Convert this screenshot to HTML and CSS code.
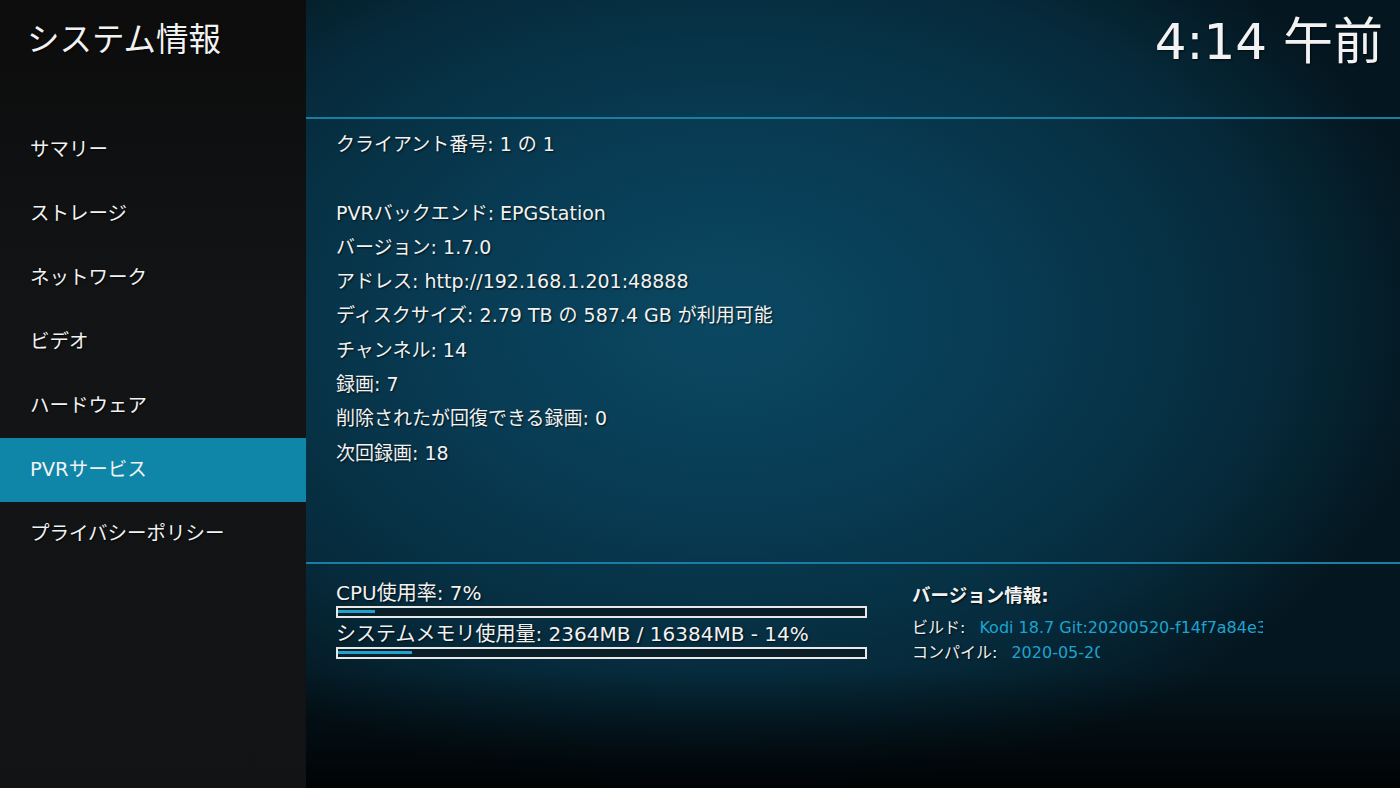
FILE: index.html
```html
<!DOCTYPE html>
<html lang="ja">
<head>
    <meta charset="UTF-8">
    <title>システム情報</title>
    <link rel="stylesheet" href="styles.css">
</head>
<body>
    <aside class="sidebar">
        <h1 class="title">システム情報</h1>
        <ul class="menu">
            <li>サマリー</li>
            <li>ストレージ</li>
            <li>ネットワーク</li>
            <li>ビデオ</li>
            <li>ハードウェア</li>
            <li class="active">PVRサービス</li>
            <li>プライバシーポリシー</li>
        </ul>
    </aside>

    <main class="panel">
        <header class="topbar">
            <div class="clock">4:14 午前</div>
        </header>

        <section class="info">
            <p>クライアント番号: 1 の 1</p>
            <p>&nbsp;</p>
            <p>PVRバックエンド: EPGStation</p>
            <p>バージョン: 1.7.0</p>
            <p>アドレス: http://192.168.1.201:48888</p>
            <p>ディスクサイズ: 2.79 TB の 587.4 GB が利用可能</p>
            <p>チャンネル: 14</p>
            <p>録画: 7</p>
            <p>削除されたが回復できる録画: 0</p>
            <p>次回録画: 18</p>
        </section>

        <footer class="status">
            <div class="usage">
                <div class="usage-label">CPU使用率: 7%</div>
                <div class="bar"><span style="width: 7%"></span></div>
                <div class="usage-label">システムメモリ使用量: 2364MB / 16384MB - 14%</div>
                <div class="bar"><span style="width: 14%"></span></div>
            </div>
            <div class="version">
                <div class="version-title">バージョン情報:</div>
                <div class="version-row">
                    <span class="key">ビルド:</span>
                    <span class="val build">Kodi 18.7 Git:20200520-f14f7a84e3</span>
                </div>
                <div class="version-row">
                    <span class="key">コンパイル:</span>
                    <span class="val compiled">2020-05-20</span>
                </div>
            </div>
        </footer>
    </main>
</body>
</html>
```

FILE: styles.css
```css
:root {
    --kodi-blue: #0f86a8;
    --kodi-line: #1a7ea2;
    --kodi-text: #f2f2f2;
    --kodi-link: #1ea3d0;
}

html, body {
    margin: 0;
    padding: 0;
}

body {
    width: 1400px;
    height: 788px;
    overflow: hidden;
    display: flex;
    font-family: "DejaVu Sans", "Noto Sans CJK JP", sans-serif;
    color: var(--kodi-text);
    background: #000;
}

/* Left menu */
.sidebar {
    width: 306px;
    flex: none;
    background: linear-gradient(180deg, #0c0c0c 0%, #121416 40%, #111315 100%);
}

.title {
    margin: 0;
    height: 118px;
    padding: 18px 0 0 27px;
    box-sizing: border-box;
    font-size: 32.5px;
    font-weight: normal;
    line-height: 44px;
    text-shadow: 1px 1px 2px rgba(0, 0, 0, 0.8);
}

.menu {
    list-style: none;
    margin: 0;
    padding: 0;
}

.menu li {
    height: 64px;
    line-height: 64px;
    padding-left: 30px;
    font-size: 19.5px;
    text-shadow: 1px 1px 2px rgba(0, 0, 0, 0.8);
}

.menu li.active {
    background: var(--kodi-blue);
    text-shadow: none;
}

/* Right panel */
.panel {
    flex: 1;
    display: flex;
    flex-direction: column;
    background:
        linear-gradient(180deg, rgba(0, 0, 0, 0) 0%, rgba(0, 0, 0, 0) 85%, rgba(0, 0, 0, 0.85) 100%),
        radial-gradient(ellipse 720px 480px at 420px 320px, #0b4862 0%, #083b53 40%, #062b3c 75%, #04161f 100%);
}

.topbar {
    height: 117px;
    flex: none;
    border-bottom: 2px solid var(--kodi-line);
    display: flex;
    justify-content: flex-end;
}

.clock {
    font-size: 50px;
    line-height: 84px;
    padding-right: 17px;
    text-shadow: 1px 1px 2px rgba(0, 0, 0, 0.6);
}

.info {
    height: 445px;
    flex: none;
    border-bottom: 2px solid var(--kodi-line);
    padding: 8px 0 0 30px;
    box-sizing: border-box;
}

.info p {
    margin: 0;
    font-size: 19px;
    line-height: 34.3px;
    text-shadow: 1px 1px 2px rgba(0, 0, 0, 0.7);
}

.status {
    display: flex;
    padding: 16px 0 0 30px;
    gap: 45px;
}

.usage {
    width: 531px;
}

.usage-label {
    font-size: 20px;
    line-height: 26px;
    text-shadow: 1px 1px 2px rgba(0, 0, 0, 0.7);
}

.bar {
    height: 12px;
    border: 2px solid #e8e8e8;
    box-sizing: border-box;
    background: #0a1e28;
    margin-bottom: 3px;
}

.bar span {
    display: block;
    height: 3px;
    margin-top: 2px;
    background: var(--kodi-link);
}

.version {
    padding-top: 3px;
}

.version-title {
    font-size: 18.5px;
    font-weight: bold;
    line-height: 26px;
    margin-bottom: 6px;
    text-shadow: 1px 1px 2px rgba(0, 0, 0, 0.8);
}

.version-row {
    display: flex;
    font-size: 16px;
    line-height: 25px;
    white-space: nowrap;
}

.key {
    margin-right: 14px;
    text-shadow: 1px 1px 2px rgba(0, 0, 0, 0.8);
}

/* values are cut to a fixed width, like the skin's label boxes */
.val {
    color: var(--kodi-link);
    overflow: hidden;
}

.build {
    width: 284px;
}

.compiled {
    width: 89px;
}
```
